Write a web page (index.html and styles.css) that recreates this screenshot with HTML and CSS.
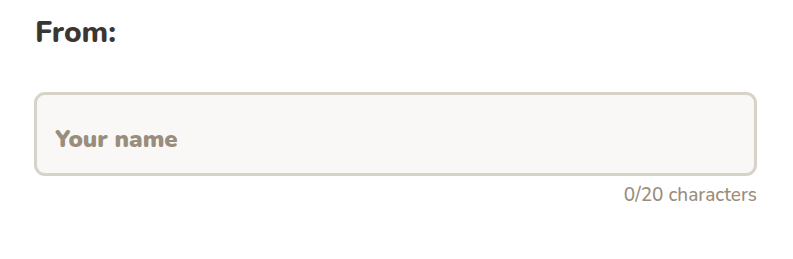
FILE: index.html
```html
<!DOCTYPE html>
<html>
<head>
<meta charset="utf-8">
<link rel="stylesheet" href="styles.css">
</head>
<body>
<div class="field">
  <label class="label" for="from">From:</label>
  <input class="input" id="from" type="text" placeholder="Your name">
  <div class="counter">0/20 characters</div>
</div>
</body>
</html>
```
FILE: styles.css
```css
html, body {
  margin: 0;
  padding: 0;
  background: #ffffff;
}
body {
  font-family: "Nunito", "Noto Sans", "Open Sans", sans-serif;
}
.field {
  display: flex;
  flex-direction: column;
  padding: 13px 36px 0 34px;
}
.label {
  font-size: 30px;
  font-weight: 800;
  color: #3b3631;
  line-height: 40px;
  padding-left: 1px;
}
.input {
  margin-top: 39px;
  box-sizing: border-box;
  height: 84px;
  border: 3px solid #d7d3c8;
  border-radius: 11px;
  background: #f9f8f6;
  padding: 10px 18px 0;
  font-family: inherit;
  font-size: 24px;
  font-weight: 900;
  color: #3b3631;
  outline: none;
}
.input::placeholder {
  color: #9a8d7c;
  opacity: 1;
}
.counter {
  margin-top: 7px;
  text-align: right;
  font-size: 19px;
  font-weight: 500;
  color: #9a8d7c;
  line-height: 24px;
}
```
